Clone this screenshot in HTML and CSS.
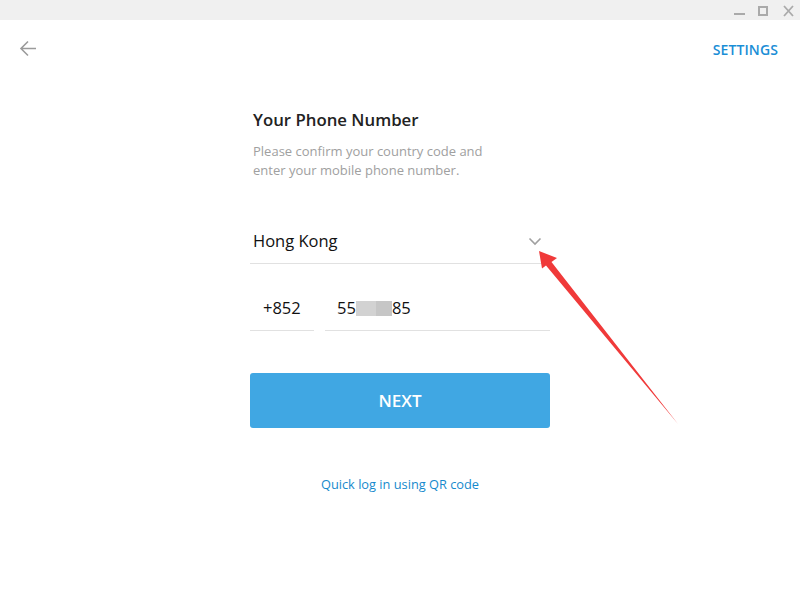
FILE: index.html
```html
<!DOCTYPE html>
<html>
<head>
<meta charset="utf-8">
<link rel="stylesheet" href="styles.css">
</head>
<body>
<div class="titlebar">
  <svg class="wctl" width="70" height="20" viewBox="0 0 70 20">
    <rect x="4" y="13" width="11" height="2" fill="#aaa"/>
    <rect x="29" y="7" width="8" height="8" fill="none" stroke="#aaa" stroke-width="2"/>
    <path d="M54 6 L63 16 M63 6 L54 16" stroke="#aaa" stroke-width="1.8" fill="none"/>
  </svg>
</div>
<div class="topbar">
  <svg class="back" width="18" height="18" viewBox="0 0 18 18">
    <path d="M17 8.5 H2 M9 1.5 L2 8.5 L9 15.5" stroke="#9b9b9b" stroke-width="1.6" fill="none"/>
  </svg>
  <span class="settings">SETTINGS</span>
</div>
<div class="form">
  <div class="title">Your Phone Number</div>
  <div class="desc">Please confirm your country code and<br>enter your mobile phone number.</div>
  <div class="country">
    <span>Hong Kong</span>
    <svg class="chev" width="14" height="9" viewBox="0 0 14 9">
      <path d="M1.5 1.5 L7 7 L12.5 1.5" stroke="#a0a0a0" stroke-width="1.6" fill="none"/>
    </svg>
  </div>
  <div class="phone-row">
    <div class="field code">+852</div>
    <div class="field number">55<span class="blur"><span class="b1"></span><span class="b2"></span></span>85</div>
  </div>
  <button class="next">NEXT</button>
  <div class="qr">Quick log in using QR code</div>
</div>
<svg class="annot" width="800" height="600" viewBox="0 0 800 600">
  <polygon points="539,251 557,258 551.5,262 678,424 546,265.5 542,268.5" fill="#f03a3a"/>
</svg>
</body>
</html>
```
FILE: styles.css
```css
html, body {
  margin: 0;
  padding: 0;
  background: #fff;
  font-family: "Open Sans", "Noto Sans", sans-serif;
  width: 800px;
  height: 600px;
  overflow: hidden;
  position: relative;
}
.titlebar {
  height: 20px;
  background: #f0f0f0;
  display: flex;
  justify-content: flex-end;
}
.wctl { display: block; margin-right: 0; }
.topbar {
  height: 58px;
  display: flex;
  align-items: center;
  justify-content: space-between;
  padding: 0 22px 0 19px;
}
.back { display: block; margin-top: 0; }
.settings {
  color: #1a8ed6;
  font-size: 14px;
  font-weight: 600;
  letter-spacing: 0.1px;
}
.form {
  width: 300px;
  margin: 0 auto;
  padding-top: 32px;
}
.title {
  font-size: 16.8px;
  line-height: 20px;
  font-weight: 600;
  color: #222;
  padding-left: 3px;
}
.desc {
  margin-top: 12px;
  font-size: 13px;
  line-height: 19px;
  color: #a0a0a0;
  padding-left: 3px;
}
.country {
  margin-top: 41px;
  height: 43px;
  box-sizing: border-box;
  padding: 10px 8px 0 3px;
  border-bottom: 1px solid #e1e1e1;
  display: flex;
  justify-content: space-between;
  font-size: 16.5px;
  line-height: 20px;
  color: #111;
}
.chev { display: block; margin-top: 6px; }
.phone-row {
  margin-top: 23px;
  display: flex;
  gap: 11px;
}
.field {
  font-size: 16.5px;
  line-height: 20px;
  color: #111;
  padding: 11px 0 12px;
  border-bottom: 1px solid #e1e1e1;
  display: flex;
  align-items: center;
}
.code { width: 64px; padding-left: 13px; box-sizing: border-box; }
.number { flex: 1; padding-left: 12px; }
.blur { display: inline-flex; height: 15px; }
.b1 { width: 20px; background: #d2d2d2; }
.b2 { width: 16px; background: #c6c6c6; }
.next {
  display: block;
  margin-top: 42px;
  width: 300px;
  height: 55px;
  border: none;
  border-radius: 3px;
  background: #40a7e3;
  color: #fff;
  font-family: "Open Sans", "Noto Sans", sans-serif;
  font-size: 17px;
  font-weight: 600;
  padding: 0;
}
.qr {
  margin-top: 46px;
  text-align: center;
  font-size: 12.8px;
  line-height: 20px;
  color: #168acd;
}
.annot {
  position: absolute;
  left: 0;
  top: 0;
  pointer-events: none;
}
```
